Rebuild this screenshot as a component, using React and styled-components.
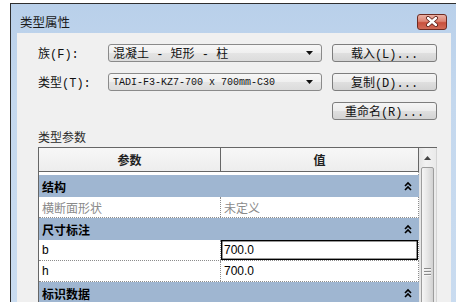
import React from 'react';
import styled, { createGlobalStyle } from 'styled-components';

const GlobalStyle = createGlobalStyle`
  html, body { margin: 0; padding: 0; background: #fff; overflow: hidden; }
  body { font-family: "Noto Sans CJK SC", sans-serif; }
  #root { height: 302px; }
`;

const MIX = `"Liberation Mono", "Noto Sans CJK SC", monospace`;

const Page = styled.div`
  height: 302px;
  box-sizing: border-box;
  padding: 3px 0 0 10px;
  overflow: hidden;
`;

const Window = styled.div`
  width: 446px;
  height: 320px;
  box-sizing: border-box;
  border-top: 1px solid #2e2e2e;
  border-left: 1px solid #2e2e2e;
  background: linear-gradient(180deg, #b9d0ea 0%, #c4d8ee 30%, #cadcf0 100%);
  padding: 0 5px 0 6px;
  display: flex;
  flex-direction: column;
`;

const TitleBar = styled.div`
  height: 29px;
  box-sizing: border-box;
  padding: 6px 4px 0 3px;
  display: flex;
  align-items: center;
  justify-content: space-between;
`;

const Title = styled.span`
  font-family: "Noto Sans CJK SC", sans-serif;
  font-size: 12.5px;
  line-height: 16px;
  color: #1a1a1a;
`;

const CloseBtn = styled.div`
  width: 30px;
  height: 16px;
  box-sizing: border-box;
  border: 1px solid #6e2b22;
  border-radius: 3px;
  background: linear-gradient(180deg, #eab1a5 0%, #dd8473 45%, #c8503d 55%, #d16c58 100%);
  display: flex;
  align-items: center;
  justify-content: center;
`;

const Client = styled.div`
  flex: 1;
  background: #f0f0f0;
  padding: 11px 14px 0 21px;
  display: flex;
  flex-direction: column;
`;

const FormGrid = styled.div`
  display: grid;
  grid-template-columns: 60px 214px 105px;
  grid-auto-rows: 18px;
  column-gap: 10px;
  row-gap: 11px;
  align-items: center;
`;

const Label = styled.span`
  font-family: ${MIX};
  font-size: 12px;
  color: #111;
  white-space: pre;
`;

const Select = styled.div`
  height: 18px;
  box-sizing: border-box;
  border: 1px solid #8a8a8a;
  border-radius: 3px;
  background: linear-gradient(180deg, #f7f7f7 0%, #efefef 50%, #e4e4e4 51%, #dcdcdc 100%);
  display: flex;
  align-items: center;
  justify-content: space-between;
  padding: 0 8px 0 4px;
`;

const SelectText = styled.span`
  font-family: ${p => (p.$mono ? `"Liberation Mono", monospace` : MIX)};
  font-size: ${p => (p.$mono ? '10px' : '12px')};
  color: #111;
  white-space: pre;
`;

const Button = styled.div`
  grid-column: 3;
  height: 18px;
  box-sizing: border-box;
  border: 1px solid #7d7d7d;
  border-radius: 3px;
  background: linear-gradient(180deg, #f5f5f5 0%, #ececec 50%, #dfdfdf 51%, #d3d3d3 100%);
  display: flex;
  align-items: center;
  justify-content: center;
  font-family: ${MIX};
  font-size: 12px;
  color: #111;
  white-space: pre;
`;

const SectionLabel = styled.div`
  margin-top: 8px;
  font-family: "Noto Sans CJK SC", sans-serif;
  font-size: 12px;
  line-height: 18px;
  color: #2a2a2a;
`;

const TableFrame = styled.div`
  margin-top: 1px;
  width: 399px;
  flex: 1;
  box-sizing: border-box;
  border-top: 1px solid #666;
  border-left: 1px solid #666;
  display: flex;
  overflow: hidden;
`;

const Grid = styled.div`
  width: 380px;
  display: flex;
  flex-direction: column;
  background: #fff;
`;

const Header = styled.div`
  height: 24px;
  box-sizing: border-box;
  display: grid;
  grid-template-columns: 182px 1fr;
  border-bottom: 1px solid #666;
  border-right: 1px solid #666;
  background: linear-gradient(180deg, #f7f7f7, #ededed);
`;

const HeadCell = styled.div`
  display: flex;
  align-items: center;
  justify-content: center;
  font-size: 12px;
  font-weight: 600;
  color: #222;
  border-right: ${p => (p.$divider ? '1px solid #666' : 'none')};
`;

const Spacer = styled.div`
  height: 3px;
  border-right: 1px dotted #9a9a9a;
`;

const GroupRow = styled.div`
  height: 22px;
  box-sizing: border-box;
  background: #9fb6d1;
  display: flex;
  align-items: center;
  justify-content: space-between;
  padding: 0 7px 0 3px;
  font-size: 12px;
  font-weight: 700;
  color: #000;
`;

const DataRow = styled.div`
  height: 21px;
  box-sizing: border-box;
  display: grid;
  grid-template-columns: 182px 1fr;
  border-bottom: 1px dotted #8c8c8c;
  border-right: 1px dotted #8c8c8c;
`;

const Cell = styled.div`
  display: flex;
  align-items: center;
  padding-left: 3px;
  font-family: ${p => (p.$latin ? '"Liberation Sans", sans-serif' : '"Noto Sans CJK SC", sans-serif')};
  font-size: 12px;
  color: ${p => (p.$dim ? '#8a8a8a' : '#000')};
  border-right: ${p => (p.$divider ? '1px dotted #8c8c8c' : 'none')};
  box-shadow: ${p => (p.$selected ? 'inset 0 0 0 1px #000, inset 0 0 0 1.5px #333' : 'none')};
`;

const ScrollBar = styled.div`
  width: 18px;
  box-sizing: border-box;
  background: linear-gradient(90deg, #e4e4e4 0%, #f2f2f2 40%, #eaeaea 100%);
  border-right: 1px solid #d4d4d4;
  display: flex;
  flex-direction: column;
  align-items: center;
`;

const ArrowArea = styled.div`
  height: 19px;
  display: flex;
  align-items: center;
  justify-content: center;
`;

const Thumb = styled.div`
  flex: 1;
  width: 13px;
  box-sizing: border-box;
  border: 1px solid #9d9d9d;
  border-radius: 2px 2px 0 0;
  background: linear-gradient(90deg, #f6f6f6 0%, #e6e6e6 50%, #d2d2d2 100%);
  display: flex;
  flex-direction: column;
  align-items: center;
`;

const Grip = styled.div`
  margin-top: 100px;
  width: 7px;
  height: 8px;
  background: repeating-linear-gradient(180deg, #8a8a8a 0 1px, #f4f4f4 1px 2px, transparent 2px 3px);
`;

const Chevrons = () => (
  <svg width="8" height="10" viewBox="0 0 8 10">
    <path d="M1 5 L4 2 L7 5 M1 9 L4 6 L7 9" fill="none" stroke="#000" strokeWidth="1.6" />
  </svg>
);

const DownArrow = () => (
  <svg width="7" height="4" viewBox="0 0 7 4">
    <polygon points="0,0 7,0 3.5,4" fill="#111" />
  </svg>
);

const CloseX = () => (
  <svg width="14" height="11" viewBox="0 0 14 11">
    <path d="M3 2 L11 9 M11 2 L3 9" stroke="#5a1d16" strokeWidth="4" strokeLinecap="round" />
    <path d="M3 2 L11 9 M11 2 L3 9" stroke="#fff" strokeWidth="2.4" strokeLinecap="round" />
  </svg>
);

const Group = ({ name }) => (
  <GroupRow>
    <span>{name}</span>
    <Chevrons />
  </GroupRow>
);

export default function App() {
  return (
    <>
      <GlobalStyle />
      <Page>
        <Window>
          <TitleBar>
            <Title>类型属性</Title>
            <CloseBtn>
              <CloseX />
            </CloseBtn>
          </TitleBar>
          <Client>
            <FormGrid>
              <Label>族(F):</Label>
              <Select>
                <SelectText>混凝土 - 矩形 - 柱</SelectText>
                <DownArrow />
              </Select>
              <Button>载入(L)...</Button>
              <Label>类型(T):</Label>
              <Select>
                <SelectText $mono>TADI-F3-KZ7-700 x 700mm-C30</SelectText>
                <DownArrow />
              </Select>
              <Button>复制(D)...</Button>
              <Button>重命名(R)...</Button>
            </FormGrid>
            <SectionLabel>类型参数</SectionLabel>
            <TableFrame>
              <Grid>
                <Header>
                  <HeadCell $divider>参数</HeadCell>
                  <HeadCell>值</HeadCell>
                </Header>
                <Spacer />
                <Group name="结构" />
                <DataRow>
                  <Cell $divider $dim>横断面形状</Cell>
                  <Cell $dim>未定义</Cell>
                </DataRow>
                <Group name="尺寸标注" />
                <DataRow>
                  <Cell $divider $latin>b</Cell>
                  <Cell $latin $selected>700.0</Cell>
                </DataRow>
                <DataRow>
                  <Cell $divider $latin>h</Cell>
                  <Cell $latin>700.0</Cell>
                </DataRow>
                <Group name="标识数据" />
              </Grid>
              <ScrollBar>
                <ArrowArea>
                  <svg width="7" height="4" viewBox="0 0 7 4">
                    <polygon points="0,4 7,4 3.5,0" fill="#444" />
                  </svg>
                </ArrowArea>
                <Thumb>
                  <Grip />
                </Thumb>
              </ScrollBar>
            </TableFrame>
          </Client>
        </Window>
      </Page>
    </>
  );
}
